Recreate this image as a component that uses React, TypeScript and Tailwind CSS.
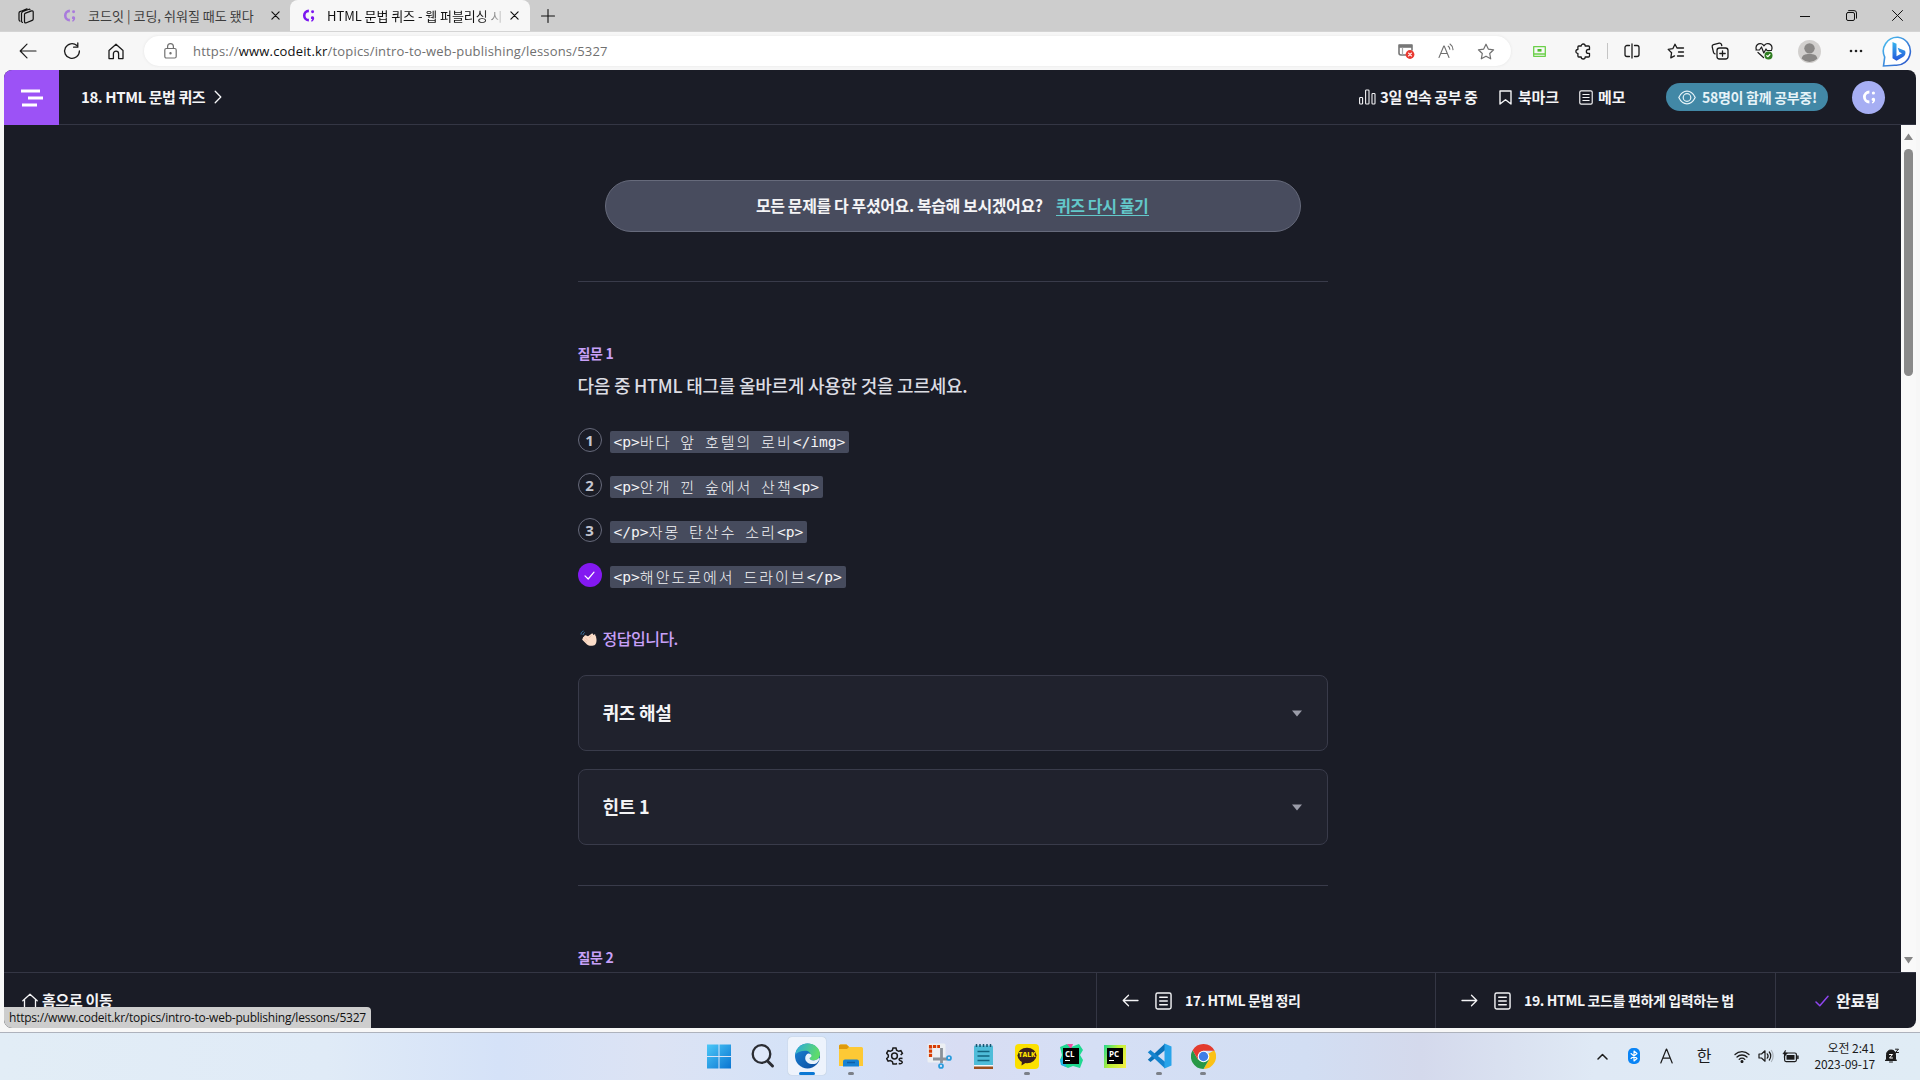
import React from "react";

type IconProps = { children: React.ReactNode; w?: number; h?: number; box?: string; className?: string; sw?: number };

const Svg = ({ children, w = 20, h = 20, box, className = "", sw = 1.2 }: IconProps) => (
  <svg
    width={w}
    height={h}
    viewBox={box ?? `0 0 ${w} ${h}`}
    fill="none"
    stroke="currentColor"
    strokeWidth={sw}
    strokeLinecap="round"
    strokeLinejoin="round"
    className={`block shrink-0 ${className}`}
  >
    {children}
  </svg>
);

const Slot = ({ className = "w-11", children }: { className?: string; children: React.ReactNode }) => (
  <div className={`flex h-full shrink-0 items-center justify-center ${className}`}>{children}</div>
);

const Logo = ({ size = 14, className = "" }: { size?: number; className?: string }) => (
  <svg width={size} height={size} viewBox="0 0 14 14" fill="none" className={`block shrink-0 ${className}`}>
    <path d="M7.400 2A5 5 0 0 0 7.400 12" stroke="currentColor" strokeWidth="2.800" />
    <circle cx="11.400" cy="3" r="1.600" fill="currentColor" />
    <path d="M11.400 7.800a1.700 1.700 0 0 1 1.700 1.800c0 2-1 3.400-2.800 4l-.5-1.100c.8-.4 1.200-.8 1.300-1.400a1.650 1.650 0 0 1 .3-3.300z" fill="currentColor" />
  </svg>
);

const Close = ({ s = 9 }: { s?: number }) => (
  <Svg w={s} h={s} box="0 0 10 10" sw={1.3}>
    <path d="M1 1l8 8M9 1l-8 8" />
  </Svg>
);

const Doc = ({ w, h }: { w: number; h: number }) => (
  <Svg w={w} h={h} box="0 0 18 19" sw={1.5}>
    <rect x="1" y="1" width="16" height="17" rx="1.8" />
    <path d="M5 5.6h8M5 9.5h8M5 13.4h8" />
  </Svg>
);

function TitleBar() {
  return (
    <div className="flex h-[31px] w-full items-end bg-[#cdcdcd] text-[13px] text-[#111]">
      <div className="flex h-[31px] w-[52px] items-center justify-center">
        <Svg w={18} h={18} sw={1.2}>
          <path d="M6 4.5l6-2.3c.6-.2 1 0 1 .6M3.5 4.5L10 1.8M2 6v6.5c0 .8.4 1.3 1 1.7M4.5 6.5v7.5c0 .8.4 1.3 1 1.5M2 6c0-.8.6-1.3 1.5-1.6M4.5 6.5c0-.8.6-1.5 1.5-2" />
          <path d="M7.5 7.6c0-.8.3-1.2 1-1.5l6-2.2c1-.3 1.700 0 1.700 1v7c0 .8-.3 1.200-1 1.500l-5.800 2.400c-1.100.4-1.900.1-1.900-1z" />
        </Svg>
      </div>
      <div className="flex h-[31px] w-[238px] items-center pl-[11px]">
        <Logo size={13} className="text-[#a97bdc]" />
        <span className="ml-3 w-[172px] whitespace-nowrap text-[#3c3c3c] tracking-[0.03px]">코드잇 | 코딩, 쉬워질 때도 됐다</span>
        <span className="ml-[11px]"><Close /></span>
      </div>
      <div className="flex h-[31px] w-[240px] items-center rounded-t-lg bg-[#f7f7f7] pl-3">
        <Logo size={13} className="text-[#7b16f0]" />
        <span className="ml-3 w-[176px] whitespace-nowrap tracking-[-0.05px] [mask-image:linear-gradient(to_right,black_155px,transparent_178px)]">
          HTML 문법 퀴즈 - 웹 퍼블리싱 시
        </span>
        <span className="ml-[7px]"><Close /></span>
      </div>
      <div className="flex h-[31px] w-[35px] items-center justify-center">
        <Svg w={14} h={14} sw={1.1}><path d="M7 .5v13M.5 7h13" /></Svg>
      </div>
      <div className="ml-auto flex h-[31px] items-center">
        <Slot className="w-[46px]"><Svg w={10} h={10} sw={1}><path d="M0 5.5h10" /></Svg></Slot>
        <Slot className="w-[46px]">
          <Svg w={11} h={11} sw={1}><rect x=".5" y="2.5" width="8" height="8" rx="1.5" /><path d="M2.6.6h5.4a2.4 2.4 0 0 1 2.5 2.4v5.2" /></Svg>
        </Slot>
        <Slot className="w-[46px]"><Svg w={11} h={11} sw={1}><path d="M.5.5l10 10M10.500.5l-10 10" /></Svg></Slot>
      </div>
    </div>
  );
}

function Toolbar() {
  return (
    <div className="flex h-[39px] w-full items-center border-t border-[#d4d4d4] bg-[#f7f7f7] text-[#1b1b1b]">
      <div className="flex h-full w-36 items-center pl-1.5">
        <Slot><Svg w={18} h={16}><path d="M17 8H1.500M8 1.200L1.200 8l6.800 6.800" /></Svg></Slot>
        <Slot><Svg w={18} h={18} sw={1.3}><path d="M16.400 9a7.400 7.400 0 1 1-2.500-5.500M14.800 1v4.200h-4.200" /></Svg></Slot>
        <Slot><Svg w={16} h={17} sw={1.3}><path d="M1 7.400L8 1.200l7 6.200v8.200h-4.400v-4.800a2.600 2.600 0 0 0-5.200 0v4.800H1z" /></Svg></Slot>
      </div>
      <div className="flex h-[30px] w-[1367px] items-center rounded-full bg-white pl-5 text-[#707070] shadow-[0_0_3px_#e4e4e4]">
        <Svg w={13} h={16}><rect x=".8" y="5.500" width="11.400" height="9.500" rx="1.500" /><path d="M3.600 5.500V3.600a2.900 2.900 0 0 1 5.800 0v1.900" /><circle cx="6.500" cy="10.200" r=".6" fill="currentColor" /></Svg>
        <span className="ml-4 w-[600px] whitespace-nowrap pt-0.5 font-['Open_Sans','Noto_Sans_CJK_KR',sans-serif] text-[13px] tracking-[0.18px]">
          https://<span className="text-[#111]">www.codeit.kr</span>/topics/intro-to-web-publishing/lessons/5327
        </span>
        <div className="ml-auto flex h-full items-center pr-[5px]">
          <Slot className="w-10">
            <Svg w={17} h={16}>
              <path d="M9 12H3a2 2 0 0 1-2-2V2h13v5" stroke="#777" strokeWidth="1.600" />
              <path d="M1 3.300h13" stroke="#777" strokeWidth="3" strokeLinecap="butt" />
              <path d="M4.500 5v6" stroke="#aaa" />
              <circle cx="12" cy="11.500" r="4.400" fill="#e93a31" stroke="none" />
              <path d="M10.600 10.100l2.800 2.800M13.400 10.100l-2.800 2.800" stroke="#fff" />
            </Svg>
          </Slot>
          <Slot className="w-10"><Svg w={17} h={16} sw={1.1}><path d="M1 14.500L5.800 3h.4L11 14.500M2.700 10.500h6.600M10.200 3.200c1 .6 1.500 1.600 1.600 3M12 1c1.700 1.100 2.800 3 3 5.600" /></Svg></Slot>
          <Slot className="w-10"><Svg w={18} h={17}><path d="M9 1.200l2.300 4.900 5.300.7-3.900 3.700 1 5.300L9 13.200l-4.700 2.600 1-5.300L1.400 6.800l5.300-.7z" /></Svg></Slot>
        </div>
      </div>
      <div className="flex h-full items-center pl-1.5">
        <Slot>
          <Svg w={13} h={11} sw={1.300}>
            <rect x=".7" y=".7" width="11.600" height="9.600" stroke="#6bd04a" /><path d="M1 8h11" stroke="#6bd04a" />
            <rect x="4.500" y="3" width="4" height="2.600" fill="#4fbd2c" stroke="none" />
          </Svg>
        </Slot>
        <Slot>
          <Svg w={16} h={17} sw={1.300}>
            <path d="M3.800 3h2.400a2 2 0 0 1 4 0h3.300a1 1 0 0 1 1 1v2.500h-1.200a1.900 1.900 0 0 0 0 3.900h1.200V13a1 1 0 0 1-1 1h-3.300a2 2 0 0 1-4 0H3.800a1 1 0 0 1-.9-1v-2.500a2 2 0 0 1 0-4V4a1 1 0 0 1 .9-1z" />
          </Svg>
        </Slot>
        <div className="mr-[2.5px] ml-[1.5px] h-4 w-px bg-[#c5c5c5]" />
        <Slot><Svg w={16} h={16} sw={1.300}><path d="M5.500 2.500H3a2 2 0 0 0-2 2v7a2 2 0 0 0 2 2h2.500M10.500 2.500H13a2 2 0 0 1 2 2v7a2 2 0 0 1-2 2h-2.500M8 1v14" /></Svg></Slot>
        <Slot><Svg w={18} h={17} sw={1.300}><path d="M10 5L8 1.200 5.800 5.700l-4.600.7 3.400 3.300-.8 5.200 3.700-2M10 5h6.500M11.500 9h5M10.500 13h6" /></Svg></Slot>
        <Slot>
          <Svg w={18} h={18} sw={1.300}>
            <rect x="6" y="6" width="11" height="11" rx="2.500" />
            <path d="M11.500 8.800v5.400M8.800 11.500h5.400M4 11.800c-.8-.2-1.300-.7-1.500-1.500L1.200 4.800c-.2-1 .3-1.900 1.300-2.200l5.700-1.500c1-.2 1.800.2 2.200 1.200l.4 1.400" />
          </Svg>
        </Slot>
        <Slot>
          <Svg w={18} h={18} sw={1.200}>
            <path d="M1.300 7.500C0 3.500 3.500.8 6.500 1.800 7.600 2.200 8.400 3 9 3.800 9.600 3 10.400 2.200 11.500 1.800 14.500.8 18 3.500 16.700 7.500M1 8h3.500l2-3 2.300 6L11 7l1 1.500h4.500M3 10.500l5.500 5" />
            <circle cx="13.500" cy="13.500" r="4" fill="#2f7d21" stroke="none" /><path d="M11.800 13.700l1.100 1 2-2.200" stroke="#fff" />
          </Svg>
        </Slot>
        <Slot className="w-[47px]">
          <svg width="23" height="23" viewBox="0 0 22 22"><circle cx="11" cy="11" r="11" fill="#d2d0ce" /><circle cx="11" cy="8" r="5" fill="#8a8886" /><path d="M3.500 18c.5-3.500 3-4.500 7.500-4.500s7 1 7.500 4.500a11 11 0 0 1-15 0z" fill="#8a8886" /></svg>
        </Slot>
        <Slot className="w-[46px]"><Svg w={14} h={4}><g fill="#222" stroke="none"><circle cx="2" cy="2" r="1.300" /><circle cx="7" cy="2" r="1.300" /><circle cx="12" cy="2" r="1.300" /></g></Svg></Slot>
        <Slot className="w-[37px]">
          <svg width="31" height="31" viewBox="0 0 31 31" className="shrink-0">
            <defs>
              <linearGradient id="bing-a" x1="0" y1="0" x2="1" y2="1"><stop offset="0" stopColor="#4cc3f1" /><stop offset="1" stopColor="#2b50c8" /></linearGradient>
              <linearGradient id="bing-b" x1="0" y1="0" x2="0" y2="1"><stop offset="0" stopColor="#37b5ee" /><stop offset="1" stopColor="#2557da" /></linearGradient>
            </defs>
            <path d="M16 1.200a14 14 0 1 1-3.500 28L1.500 30l1.200-8.800A14 14 0 0 1 16 1.200z" fill="#fff" stroke="url(#bing-a)" strokeWidth="1.600" />
            <path d="M10.500 6l4 1.700v12.500l5.500-3-2.700-1.300-1.700-4.200 7.400 3c1.300 3-.3 5.300-2.500 6.500l-6 3.600-4-2.500z" fill="url(#bing-b)" />
          </svg>
        </Slot>
      </div>
    </div>
  );
}

function LessonHeader() {
  return (
    <header className="flex h-[55px] shrink-0 items-center border-b border-[#343644] text-[15px] font-bold text-[#f4f4f6]">
      <div className="-mb-px flex h-[55px] w-[55px] items-center justify-center bg-[#9c52f6]">
        <Svg w={24} h={18} sw={3}>
          <g stroke="#fff" strokeLinecap="butt"><path d="M1 2h19M8 9h15M2 16h15" /></g>
        </Svg>
      </div>
      <span className="ml-[22px] w-[125px] whitespace-nowrap tracking-[-0.43px]">18. HTML 문법 퀴즈</span>
      <Svg w={8} h={14} className="ml-2" sw={1.300}><path d="M1.200 1.200L6.800 7l-5.600 5.800" /></Svg>
      <div className="ml-auto flex items-center">
        <Svg w={17} h={16} sw={1.100}><rect x=".6" y="8.500" width="3" height="6.500" rx=".8" /><rect x="6.600" y="1" width="3.400" height="14" rx=".8" /><rect x="13" y="4.500" width="3" height="10.500" rx=".8" /></Svg>
        <span className="ml-[4px] w-[119px] whitespace-nowrap tracking-[-0.45px]">3일 연속 공부 중</span>
        <Svg w={13} h={15} sw={1.400}><path d="M1 1h11v13l-5.500-4.300L1 14z" /></Svg>
        <span className="ml-[6px] w-[61px] whitespace-nowrap tracking-[-0.2px]">북마크</span>
        <Doc w={14} h={15} />
        <span className="ml-[5px] w-[68px] whitespace-nowrap tracking-[-0.1px]">메모</span>
        <div className="flex h-7 w-[162px] items-center rounded-full bg-[#4288a6] pl-3 text-[14px] text-[#e6f3f8]">
          <Svg w={18} h={15} sw={1.200}><path d="M.8 7.500C3 3 6 1.200 9 1.200s6 1.800 8.200 6.300C15 12 12 13.800 9 13.800S3 12 .8 7.500z" /><circle cx="9" cy="7.500" r="3.800" /></Svg>
          <span className="ml-[6px] whitespace-nowrap tracking-[-0.28px]">58명이 함께 공부중!</span>
        </div>
        <div className="mr-[31px] ml-6 flex size-[33px] items-center justify-center rounded-full bg-[#a6aef3] text-white"><Logo size={14} /></div>
      </div>
    </header>
  );
}

const Code = ({ text }: { text: string }) => (
  <code className="mt-[3px] flex h-[22px] items-center overflow-hidden rounded-[2px] bg-[#464b5d] px-1 font-['DejaVu_Sans_Mono','Noto_Sans_CJK_KR',monospace] text-[14.6px] leading-[22px] whitespace-pre text-[#f4f4f6]">
    {text.split(/([가-힣]+)/).map((part, i) =>
      /[가-힣]/.test(part) ? (
        <span key={i} className="-mt-px font-['Noto_Sans_CJK_KR',sans-serif] text-[15px] font-light tracking-[2px]">{part}</span>
      ) : (
        <span key={i}>{part}</span>
      ),
    )}
  </code>
);

const options = ["<p>바다 앞 호텔의 로비</img>", "<p>안개 낀 숲에서 산책<p>", "</p>자몽 탄산수 소리<p>", "<p>해안도로에서 드라이브</p>"];

const Panel = ({ title }: { title: string }) => (
  <div className="flex h-[76px] items-center justify-between rounded-lg border border-[#393b4a] bg-[#20222d] pr-[25px] pl-6 text-[18px] font-bold text-[#f4f4f6]">
    <span className="-mt-0.5 tracking-[-0.25px]">{title}</span>
    <svg width="10" height="7" viewBox="0 0 10 7"><path d="M0 .5h10L5 6.500z" fill="#9a9ca8" /></svg>
  </div>
);

function Quiz() {
  return (
    <main className="h-full w-[750px] shrink-0">
      <div className="mx-[27px] mt-[55px] flex h-[52px] items-center justify-center rounded-full border border-[#666a7b] bg-[#484c5e] pb-0.5 text-[16px] font-bold text-[#f4f4f6]">
        <span className="w-[300px] whitespace-nowrap tracking-[-0.4px]">모든 문제를 다 푸셨어요. 복습해 보시겠어요?</span>
        <span className="w-[93px] border-b border-[#63c8ca] leading-[20px] whitespace-nowrap text-[#63c8ca] tracking-[-0.4px]">퀴즈 다시 풀기</span>
      </div>
      <hr className="mt-[49px] border-[#393b4a]" />
      <p className="mt-[61px] text-[14px] leading-5 font-bold tracking-[-0.3px] text-[#c7a0f8]">질문 1</p>
      <h1 className="mt-[9px] text-[18px] leading-[26px] font-medium tracking-[-0.25px] text-[#dcdde3]">다음 중 HTML 태그를 올바르게 사용한 것을 고르세요.</h1>
      <ol className="mt-[30px] flex flex-col gap-5">
        {options.map((o, i) => (
          <li key={o} className="flex h-[25px] items-start gap-2">
            {i < 3 ? (
              <span className="flex size-6 items-center justify-center rounded-full border border-[#676a7b] font-['Noto_Sans',sans-serif] text-[15px] font-bold text-[#c4c6d0]">{i + 1}</span>
            ) : (
              <span className="flex size-6 items-center justify-center rounded-full bg-[#8319f1] text-white">
                <Svg w={11} h={9}><path d="M1 4.800L4.200 8 10 1.200" /></Svg>
              </span>
            )}
            <Code text={o} />
          </li>
        ))}
      </ol>
      <div className="mt-[38px] flex h-6 items-center text-[16px] font-medium text-[#c7a0f8]">
        <svg width="18" height="18" viewBox="0 0 18 18" className="ml-0.5">
          <path d="M5 6.500c1-.8 2 .2 3 .8l3.500-2.600c1-.6 2 .3 1.500 1.300l1.300-.6c1-.2 1.500.7 1 1.500.8.1 1.100.8.8 1.500.7 1.600.7 5.500-.8 7-2 2-6.500 1.800-8.300.2L2.500 11c-.8-1 0-1.800.8-1.600C2.500 8.500 3.200 7.500 4.200 8 3.800 7.300 4.200 6.600 5 6.500z" fill="#fbdcc8" />
          <path d="M5 8.500l3 3M4 10.500l3 2.800M11.500 6.500L9 9" stroke="#e9b99d" strokeWidth=".7" />
          <path d="M1 5.500c0-1.500 1-3 2.500-3.500M3 6c0-1.200.8-2 1.800-2.500" stroke="#3e7fb0" strokeWidth="1" fill="none" />
        </svg>
        <span className="ml-[5px] tracking-[-0.5px]">정답입니다.</span>
      </div>
      <div className="mt-[25px] flex flex-col gap-[18px]">
        <Panel title="퀴즈 해설" />
        <Panel title="힌트 1" />
      </div>
      <hr className="mt-10 border-[#393b4a]" />
      <p className="mt-[61px] text-[14px] leading-5 font-bold tracking-[-0.3px] text-[#c7a0f8]">질문 2</p>
    </main>
  );
}

function LessonFooter() {
  return (
    <footer className="relative flex h-14 shrink-0 border-t border-[#343644] text-[14px] font-bold text-[#f4f4f6]">
      <div className="flex w-[1093px] items-center border-r border-[#343644] pl-[18px] text-[15px]">
        <Svg w={16} h={16} sw={1.300}><path d="M.8 7.800L8 1.200l7.200 6.600M2.500 6.800v8.400h11V6.800" /></Svg>
        <span className="ml-[4px] tracking-[-0.3px]">홈으로 이동</span>
      </div>
      <div className="flex w-[339px] items-center border-r border-[#343644] pl-[25px]">
        <Svg w={17} h={13} sw={1.300}><path d="M16 6.500H1.200M6.500 1.200L1.200 6.500l5.300 5.300" /></Svg>
        <span className="ml-4"><Doc w={17} h={18} /></span>
        <span className="ml-[13px] whitespace-nowrap tracking-[-0.43px]">17. HTML 문법 정리</span>
      </div>
      <div className="flex w-[340px] items-center border-r border-[#343644] pl-[25px]">
        <Svg w={17} h={13} sw={1.300}><path d="M1 6.500h14.800M10.500 1.200l5.300 5.300-5.300 5.300" /></Svg>
        <span className="ml-4"><Doc w={17} h={18} /></span>
        <span className="ml-[13px] whitespace-nowrap tracking-[-0.36px]">19. HTML 코드를 편하게 입력하는 법</span>
      </div>
      <div className="flex flex-1 items-center pl-[39px] text-[16px]">
        <Svg w={14} h={12} sw={1.500} className="text-[#8f45ef]"><path d="M1 7l3.800 3.800L13 1.200" /></Svg>
        <span className="-mt-0.5 ml-[7px] tracking-[-0.2px]">완료됨</span>
      </div>
      <div className="absolute bottom-0 left-0 flex h-[21px] w-[367px] items-center rounded-tr bg-[#cdcdcd] pl-[5px] font-['Open_Sans',sans-serif] text-[12px] font-normal whitespace-nowrap text-[#111] tracking-[-0.23px]">
        https://www.codeit.kr/topics/intro-to-web-publishing/lessons/5327
      </div>
    </footer>
  );
}

const TaskIcon = ({ dot = "", active = false, children }: { dot?: string; active?: boolean; children: React.ReactNode }) => (
  <div className="relative flex h-[47px] w-11 shrink-0 items-center justify-center pb-px">
    {active && <div className="absolute inset-x-[3px] top-[4px] h-[38px] rounded bg-white/60 shadow-[0_0_1px_#9aa]" />}
    <div className="relative">{children}</div>
    {dot && <div className={`absolute bottom-[5px] h-[3px] rounded-full ${dot}`} />}
  </div>
);

const grayDot = "w-1.5 bg-[#7c8088]";

function Taskbar() {
  return (
    <div className="flex h-12 w-full items-center border-t border-[#aeb2bc] bg-[linear-gradient(90deg,#e2edf6_0%,#e0ebf7_17%,#d5e2f8_26%,#dce3f4_34%,#d3e2f8_43%,#d8ddf3_50%,#d5dff5_57%,#d2def3_68%,#d4d9ec_74%,#dfe9f5_83%,#e0ecf5_100%)] text-[#1b1b1b]">
      <div className="flex w-[1225px] justify-end">
        <TaskIcon>
          <svg width="24" height="25" viewBox="0 0 24 25" className="block">
            <defs><linearGradient id="win" x1="0" y1="0" x2="1" y2="1"><stop offset="0" stopColor="#4cc8f8" /><stop offset="1" stopColor="#0a74d1" /></linearGradient></defs>
            <path d="M0 .5h11.500V12H0zM12.500.5H24V12H12.500zM0 13h11.500v11.500H0zM12.500 13H24v11.500H12.500z" fill="url(#win)" />
          </svg>
        </TaskIcon>
        <TaskIcon>
          <svg width="24" height="26" viewBox="0 0 24 26" fill="none" stroke="#2b2d33" className="block"><circle cx="10.500" cy="11" r="8.800" strokeWidth="2.300" fill="#dfe9fb" /><path d="M16.500 18l5 5" strokeWidth="3" strokeLinecap="round" /></svg>
        </TaskIcon>
        <TaskIcon active dot="w-4 bg-[#0b78d4]">
          <svg width="25" height="26" viewBox="0 0 24 24" className="block">
            <defs>
              <linearGradient id="ed1" x1="0" y1="0" x2="1" y2=".3"><stop offset="0" stopColor="#2aa8e0" /><stop offset="1" stopColor="#5fdc6a" /></linearGradient>
              <linearGradient id="ed2" x1="0" y1="0" x2="1" y2="1"><stop offset="0" stopColor="#1b86d8" /><stop offset="1" stopColor="#0b4a9c" /></linearGradient>
            </defs>
            <circle cx="12" cy="12" r="12" fill="url(#ed2)" />
            <path d="M.3 10.500C1.500 4 6.300 0 12 0c7 0 12 4.800 12 10 0 4-3 6.200-6.300 6.200-2.700 0-3.700-1-3.700-2 0-.8 1-1.200 1-3 0-2.200-2-4.200-5.200-4.200C6 7 2.300 8.500.3 10.500z" fill="url(#ed1)" />
            <path d="M14 14.200c0 1 1.200 2 3.700 2 2 0 4-.8 5.200-2.200l.8.500c-.6 2-1.800 3.600-3.400 4.700-5 1.800-10.500-.7-10.500-5 0-2.500 1.300-4.200 3-4.700 2 .2 3 1.200 3 2.200 0 1.500-1.800 1.700-1.800 2.500z" fill="#e9f3fc" />
          </svg>
        </TaskIcon>
        <TaskIcon dot={grayDot}>
          <svg width="24" height="24" viewBox="0 0 24 24" className="block"><path d="M0 2a1.500 1.500 0 0 1 1.500-1.500h6L10.500 3H22.500A1.500 1.500 0 0 1 24 4.500V22H0z" fill="#fdc935" /><path d="M0 2a1.500 1.500 0 0 1 1.500-1.500h6L10 3 8 5H0z" fill="#e09b0c" /><path d="M4 22.500v-5a2 2 0 0 1 2-2h12a2 2 0 0 1 2 2v5z" fill="#1782d3" /><path d="M8 18.500h8" stroke="#0e5ea5" strokeWidth="1.500" /></svg>
        </TaskIcon>
        <TaskIcon>
          <svg width="18" height="20" viewBox="0 0 18 20" fill="none" stroke="#1b1b1b" strokeWidth="1.500" className="block">
            <path d="M11 17.500l-1 .5H7l-.6-2.300-2-1.100-2.300.6-1.500-2.600L2.300 11V9L.6 7.300l1.500-2.600 2.300.6 2-1.100L7 2h3l.6 2.200 2 1.100 2.300-.6 1.500 2.600L14.700 9" />
            <circle cx="8.500" cy="10" r="2.900" /><path d="M16.500 12.500c-3.500-1-4.500 1.500-2 2.300 3 .8 2 3.500-1.800 2.700" />
          </svg>
        </TaskIcon>
        <TaskIcon>
          <svg width="25" height="26" viewBox="0 0 25 26" fill="none" className="block">
            <rect x=".5" y=".5" width="18" height="19" rx="1.500" fill="#eceff3" />
            <path d="M3.500 14V3.500h9.500" stroke="#d83b01" strokeWidth="3.200" strokeDasharray="3.300 1" />
            <path d="M14.500 5v15M6 16h14" stroke="#8b9199" strokeWidth="2.800" />
            <circle cx="14" cy="23" r="2" stroke="#279bdc" strokeWidth="1.700" /><circle cx="22" cy="15" r="2" stroke="#279bdc" strokeWidth="1.700" />
          </svg>
        </TaskIcon>
        <TaskIcon>
          <svg width="19" height="27" viewBox="0 0 19 27" className="block"><rect y="2.500" width="19" height="22" rx="1" fill="#4fbcd9" /><path d="M0 23h19v3H0z" fill="#9c4f1d" /><path d="M0 22h19v1.500H0z" fill="#f5f7f9" /><path d="M2.500 1v3M6 1v3M9.500 1v3M13 1v3M16.500 1v3" stroke="#185672" strokeWidth="1.500" /><path d="M3.500 8.500h12M3.500 13h12M3.500 17.500h12" stroke="#12637f" strokeWidth="1.700" /></svg>
        </TaskIcon>
        <TaskIcon dot={grayDot}>
          <div className="relative flex h-[25px] w-6 items-center justify-center rounded-[4px] bg-[#fbe000]">
            <svg width="20" height="19" viewBox="0 0 20 19" className="absolute"><ellipse cx="10" cy="8.500" rx="9.500" ry="7.700" fill="#391f1d" /><path d="M5 13l-.5 5.500L10 15z" fill="#391f1d" /></svg>
            <span className="relative -mt-0.5 font-['Open_Sans',sans-serif] text-[6.500px] leading-none font-extrabold text-[#fbe000]">TALK</span>
          </div>
        </TaskIcon>
        <TaskIcon>
          <div className="relative flex size-[25px] items-center justify-center">
            <svg width="25" height="26" viewBox="0 0 25 26" className="absolute"><path d="M1 4l7-3 4 3 8-3 4 6-3 5 3 5-3 8-7-2-5 2-6-3-2-5 2-5z" fill="#1fd890" /><path d="M8 1l4 5 2-5z" fill="#f24ba0" /><path d="M1 17l6-6v13l-5-2z" fill="#1fb7e2" /></svg>
            <span className="relative block h-[16px] w-[16px] bg-black pt-[2px] pl-[2px] font-['Open_Sans',sans-serif] text-[8px] leading-none font-bold text-white">CL<i className="mt-[2px] block h-px w-[5px] bg-white" /></span>
          </div>
        </TaskIcon>
        <TaskIcon>
          <div className="flex h-[23px] w-[22px] items-center justify-center bg-[linear-gradient(115deg,#22d88f,#b9ef3a_45%,#f8ee45)]">
            <span className="block h-[16px] w-4 bg-black pt-[2px] pl-[2px] font-['Open_Sans',sans-serif] text-[8px] leading-none font-bold text-white">PC<i className="mt-[2px] block h-px w-[5px] bg-white" /></span>
          </div>
        </TaskIcon>
        <TaskIcon dot={grayDot}>
          <svg width="25" height="26" viewBox="0 0 25 26" className="block"><path d="M18 .5v6.800L3.500 19 .8 16.800z" fill="#0b71b8" /><path d="M18 25.500v-6.800L3.500 7 .8 9.200z" fill="#1484cf" /><path d="M17.500.5L24.500 3.500v19l-7 3z" fill="#28a4ea" /></svg>
        </TaskIcon>
        <TaskIcon dot={grayDot}>
          <svg width="25" height="25" viewBox="0 0 24 24" className="block">
            <path d="M12 12L22.400 6A12 12 0 0 1 12 24l5.200-9z" fill="#fbc116" /><path d="M1.600 6A12 12 0 0 0 12 24l5.200-9L12 12 6.800 15z" fill="#279847" /><path d="M12 6.500h10.600A12 12 0 0 0 1.600 6l5.200 9z" fill="#e33b2e" />
            <circle cx="12" cy="12" r="5.600" fill="#fff" /><circle cx="12" cy="12" r="4.500" fill="#3f7ee8" />
          </svg>
        </TaskIcon>
      </div>
      <div className="ml-auto flex h-full items-center pb-px">
        <Slot className="w-8"><Svg w={11} h={7} sw={1.500}><path d="M1 6l4.500-4.500L10 6" /></Svg></Slot>
        <Slot className="w-8">
          <div className="flex h-4 w-3 items-center justify-center rounded-[5px] bg-[#0a84f5] text-white"><Svg w={8} h={12} sw={1.100}><path d="M1 3.500l6 5-3 2.500V1l3 2.500-6 5" /></Svg></div>
        </Slot>
        <Slot className="w-8"><Svg w={13} h={16} sw={1.200}><path d="M.8 15L6.300 1.200h.4L12.200 15M2.800 10.200h7.400" /></Svg></Slot>
        <Slot className="w-11"><span className="-mt-0.5 text-[16px] leading-none">한</span></Slot>
        <Slot className="w-[32px]"><Svg w={16} h={13} sw={1.300}><path d="M1 4.500a10 10 0 0 1 14 0M3 7a7.200 7.200 0 0 1 10 0M5.200 9.400a4 4 0 0 1 5.600 0" /><circle cx="8" cy="11.500" r=".9" fill="currentColor" /></Svg></Slot>
        <Slot className="w-4"><Svg w={16} h={14} sw={1.200}><path d="M1 5h2.500L7 1.800v10.400L3.500 9H1z" /><path d="M9.200 4.800c1 1.200 1 3.200 0 4.400M11.300 3c1.900 2.200 1.900 5.800 0 8" /><path d="M13.400 1.500c2.300 3 2.300 8 0 11" stroke="#aab2ba" /></Svg></Slot>
        <Slot className="w-8">
          <Svg w={17} h={13} sw={1.200}>
            <rect x="2.600" y="3" width="11.800" height="8.600" rx="1.500" /><rect x="4.500" y="5" width="8" height="4.700" fill="currentColor" stroke="none" />
            <path d="M15.900 6v2.600" strokeWidth="1.500" /><path d="M3.500 0L.8 4h2L2 7.200 5.500 3H3.400z" fill="currentColor" strokeWidth=".4" />
          </Svg>
        </Slot>
        <div className="w-[69px] text-right text-[12px] leading-4 tracking-[-0.1px]">
          <div className="whitespace-nowrap">오전 2:41</div>
          <div className="whitespace-nowrap">2023-09-17</div>
        </div>
        <Slot className="mr-[12px] w-[33px]">
          <Svg w={16} h={16} sw={1}>
            <path d="M2.500 11V6.500a4.500 4.500 0 0 1 5-4.500c3 0 4 2.500 4 4.500V11l1 1.500H1.500zM5.500 14h3" fill="currentColor" />
            <path d="M5.500 6.500h3l-3 3.500h3" stroke="#fff" /><path d="M11.500 1.200h3l-3 3.300h3" />
          </Svg>
        </Slot>
      </div>
    </div>
  );
}

export default function App() {
  return (
    <div className="flex h-[1080px] w-[1920px] flex-col overflow-hidden bg-[#f7f7f7] font-['Noto_Sans_CJK_KR',sans-serif]">
      <TitleBar />
      <Toolbar />
      <div className="mx-1 mb-1 flex h-[958px] shrink-0 flex-col overflow-hidden rounded-lg bg-[#1a1c26]">
        <LessonHeader />
        <div className="flex h-[847px] shrink-0 overflow-hidden">
          <div className="flex flex-1 justify-center"><Quiz /></div>
          <div className="flex w-[15px] flex-col items-center justify-between bg-[#f9f9f9] py-[8px]">
            <svg width="9" height="7" viewBox="0 0 9 7"><path d="M0 7L4.500.5 9 7z" fill="#868686" /></svg>
            <div className="mt-[9px] h-[227px] w-[9px] rounded-full bg-[#8a8a8a]" />
            <svg width="9" height="7" viewBox="0 0 9 7" className="mt-auto"><path d="M0 0l4.500 6.500L9 0z" fill="#868686" /></svg>
          </div>
        </div>
        <LessonFooter />
      </div>
      <Taskbar />
    </div>
  );
}
